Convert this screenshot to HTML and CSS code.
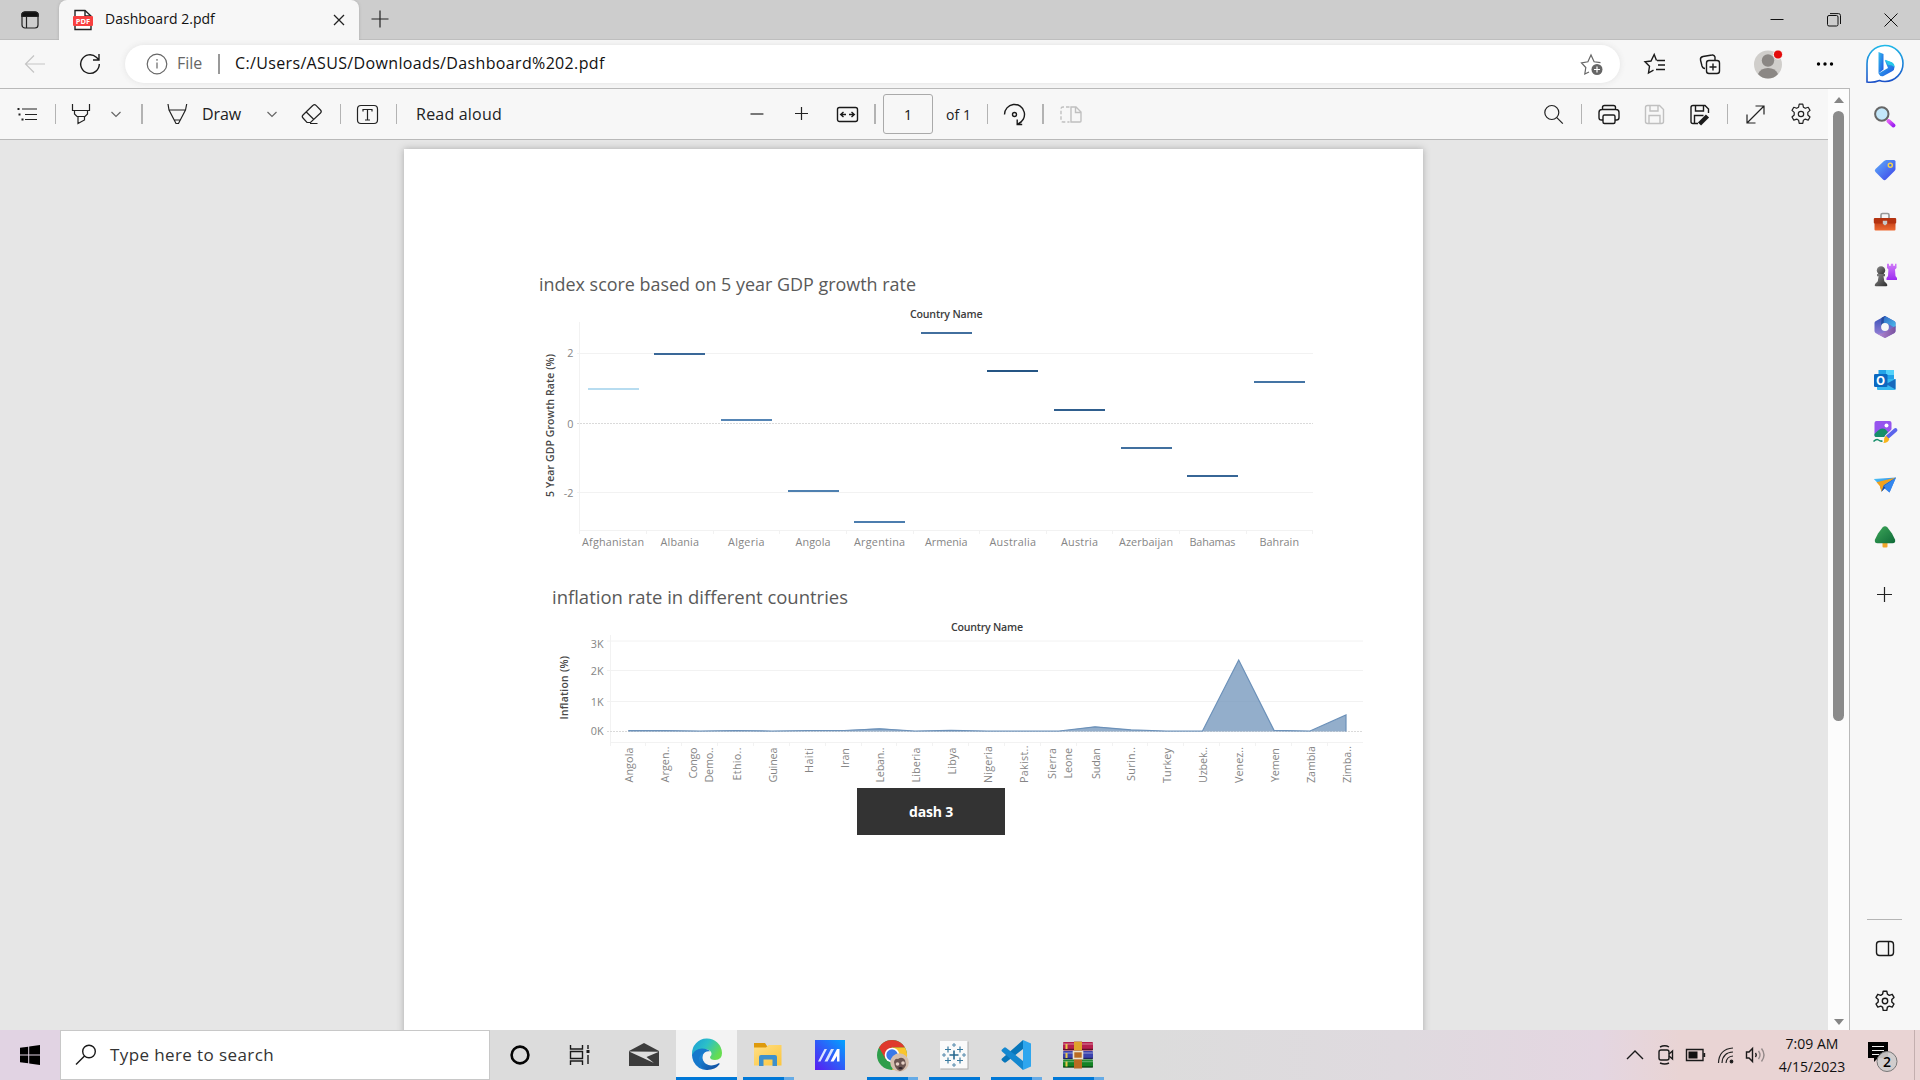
FILE: index.html
```html
<!DOCTYPE html>
<html lang="en">
<head>
<meta charset="utf-8">
<title>Dashboard 2.pdf</title>
<link rel="stylesheet" href="styles.css">
</head>
<body>
<svg class="defs" width="0" height="0">
  <defs>
    <linearGradient id="bing" x1="0" y1="0" x2="0" y2="1"><stop offset="0" stop-color="#20b8e8"/><stop offset="1" stop-color="#1b50c8"/></linearGradient>
    <linearGradient id="bingB" x1="0" y1="0" x2="1" y2="1"><stop offset="0" stop-color="#36c2ef"/><stop offset="1" stop-color="#1c4de0"/></linearGradient>
    <linearGradient id="handle" x1="0" y1="0" x2="1" y2="1"><stop offset="0" stop-color="#e05cf5"/><stop offset="1" stop-color="#9d20f0"/></linearGradient>
    <linearGradient id="tag" x1="0" y1="0" x2="1" y2="1"><stop offset="0" stop-color="#5eb0fa"/><stop offset="1" stop-color="#3d3fe8"/></linearGradient>
    <linearGradient id="box" x1="0" y1="0" x2="0" y2="1"><stop offset="0" stop-color="#b8330f"/><stop offset="1" stop-color="#ee6a32"/></linearGradient>
    <linearGradient id="pawn" x1="0" y1="0" x2="1" y2="1"><stop offset="0" stop-color="#8a8a8a"/><stop offset="1" stop-color="#2e2e2e"/></linearGradient>
    <linearGradient id="rook" x1="0" y1="0" x2="0" y2="1"><stop offset="0" stop-color="#d07af8"/><stop offset="1" stop-color="#9c2cf0"/></linearGradient>
    <linearGradient id="plane" x1="0" y1="0" x2="1" y2="1"><stop offset="0" stop-color="#4cc6f4"/><stop offset="1" stop-color="#2a62e4"/></linearGradient>
    <linearGradient id="tree" x1="0" y1="0" x2="1" y2="1"><stop offset="0" stop-color="#3ea85a"/><stop offset="1" stop-color="#0f6a38"/></linearGradient>
    <linearGradient id="edgeTop" x1="0" y1="0" x2="1" y2=".5"><stop offset="0" stop-color="#1a9bd8"/><stop offset=".5" stop-color="#2cc0c8"/><stop offset="1" stop-color="#66dd50"/></linearGradient>
    <linearGradient id="edgeLow" x1="0" y1="0" x2="1" y2="1"><stop offset="0" stop-color="#1b8fe0"/><stop offset="1" stop-color="#10489a"/></linearGradient>
    <linearGradient id="folder" x1="0" y1="0" x2="1" y2="1"><stop offset="0" stop-color="#ffdf85"/><stop offset="1" stop-color="#fcc53c"/></linearGradient>
    <linearGradient id="myasus" x1="0" y1="1" x2="1" y2="0"><stop offset="0" stop-color="#5a1cf0"/><stop offset=".5" stop-color="#2f5cf8"/><stop offset="1" stop-color="#00a4ff"/></linearGradient>
    <linearGradient id="hexA" x1="0" y1="0" x2="1" y2="1"><stop offset="0" stop-color="#2e5fc0"/><stop offset="1" stop-color="#4cc0ee"/></linearGradient>
    <linearGradient id="hexB" x1="0" y1="0" x2="0" y2="1"><stop offset="0" stop-color="#3450b8"/><stop offset="1" stop-color="#a486d8"/></linearGradient>
    <linearGradient id="hexC" x1="0" y1="0" x2="1" y2="0"><stop offset="0" stop-color="#b48ad4"/><stop offset="1" stop-color="#7a52a0"/></linearGradient>
    <symbol id="gear" viewBox="0 0 24 24"><path d="M10.2 2.2h3.6l.6 3 1.9 1.1 2.9-1 1.8 3.1-2.2 2v2.6l2.2 2-1.8 3.1-2.9-1-1.9 1.1-.6 3.2h-3.6l-.6-3.2-1.9-1.1-2.9 1-1.8-3.1 2.2-2v-2.6l-2.2-2 1.800-3.1 2.9 1 1.9-1.1z" stroke-linejoin="round"/><circle cx="12" cy="12" r="2.7"/></symbol>
    <symbol id="chevron" viewBox="0 0 12 12"><path d="M1.5 4l4.5 4.500 4.500-4.500"/></symbol>
  </defs>
</svg>

<header class="titlebar">
  <div class="workspaces"><svg class="ic" width="20" height="20" viewBox="0 0 20 20"><rect x="2" y="2" width="16" height="16" rx="3"/><path d="M2 6V4.500Q2 2 5 2H15Q18 2 18 5V6ZM6.500 6V18" /><path d="M2 3.500Q3 2 5 2H15Q18 2 18 4V6.500H2Z" fill="#111"/></svg></div>
  <div class="tab">
    <svg width="20" height="22" viewBox="0 0 20 22"><path d="M2 1.500H12L18 7V20.500H2Z" fill="#fff" stroke="#222" stroke-width="1.400"/><path d="M12 1.500V7H18" fill="none" stroke="#222" stroke-width="1.400"/><rect x="0" y="7" width="20" height="10" rx="1" fill="#f84040"/><text class="pdf-mark" x="10" y="14.800" text-anchor="middle">PDF</text></svg>
    <span class="tab-title">Dashboard 2.pdf</span>
    <svg class="ic tab-close" width="12" height="12" viewBox="0 0 12 12"><path d="M1 1l10 10M11 1L1 11"/></svg>
  </div>
  <svg class="ic new-tab" width="18" height="18" viewBox="0 0 18 18"><path d="M9 .5v17M.5 9h17"/></svg>
  <div class="window-controls">
    <svg class="ic thin" width="14" height="14" viewBox="0 0 14 14"><path d="M.5 6.500h13"/></svg>
    <svg class="ic thin" width="14" height="14" viewBox="0 0 14 14"><rect x=".5" y="2.500" width="10.500" height="10.500" rx="1.500"/><path d="M3 .6h8.500q2 0 2 2V11"/></svg>
    <svg class="ic thin" width="14" height="14" viewBox="0 0 14 14"><path d="M.5.5l13 13M13.500.5l-13 13"/></svg>
  </div>
</header>

<nav class="navbar">
  <svg class="ic faded" width="24" height="24" viewBox="0 0 24 24"><path d="M22 12H2.500M11 3.500L2.500 12l8.500 8.500"/></svg>
  <svg class="ic bold" width="24" height="24" viewBox="0 0 24 24"><path d="M21.300 12a9.300 9.300 0 1 1-3-6.800L21 7.800M21 2v6h-6"/></svg>
  <div class="address">
    <svg class="ic gray" width="22" height="22" viewBox="0 0 22 22"><circle cx="11" cy="11" r="9.800"/><path d="M11 9.500v6M11 6v1.800"/></svg>
    <span class="scheme">File</span><i class="bar"></i><span class="url">C:/Users/ASUS/Downloads/Dashboard%202.pdf</span>
    <svg class="ic gray add-fav" width="24" height="24" viewBox="0 0 24 24"><path d="M9 20l-4.200 2 1-6.500L1.500 10.800l6.400-1L11 3l3.100 6.800 6.400.9"/><circle cx="17" cy="17.500" r="5.500" fill="#666" stroke="none"/><path d="M17 14.500v6M14 17.500h6" stroke="#fff"/></svg>
  </div>
  <svg class="ic bold" width="24" height="24" viewBox="0 0 24 24"><path d="M13.500 8.500L11.200 2.500 8 9l-6 .8 4.500 4.500-1 6.700 5-2.800M14 8.500h8M15 13h7M13 17.500h9"/></svg>
  <svg class="ic bold" width="24" height="24" viewBox="0 0 24 24"><rect x="8.500" y="8.500" width="13" height="13" rx="2.500"/><path d="M15 11.500v7M11.500 15h7M17 8V5q-.8-2.500-3-2L5 4.500Q2 5.200 2.500 8l1.500 6q.8 2.500 3 2.500"/></svg>
  <svg width="30" height="30" viewBox="0 0 30 30"><circle cx="15" cy="15.500" r="14" fill="#d0cecb"/><circle cx="15" cy="11.500" r="6.200" fill="#8b8784"/><path d="M5 25q2.500-6 10-6t10 6q-4 4.500-10 4.500T5 25z" fill="#8b8784"/><circle cx="25" cy="5.500" r="4.600" fill="#e40b0b" stroke="#f7f7f7"/></svg>
  <svg width="20" height="20" viewBox="0 0 20 20"><circle cx="3.500" cy="10" r="1.700"/><circle cx="10" cy="10" r="1.700"/><circle cx="16.500" cy="10" r="1.700"/></svg>
  <svg width="40" height="40" viewBox="0 0 40 40"><path d="M2 38V20A18 18 0 1 1 20 37.500q-3.500 0-5.500-1Q8 39 2 38z" fill="#fff" stroke="url(#bing)" stroke-width="1.600"/><path d="M13.500 8l5 1.900V25.500l-5 4z" fill="url(#bingB)"/><path d="M13.500 29.500L23 24l-1.500-3.500-1.800-4.500 7.200 2.500q2.600 1.500 2.600 4.500t-2.300 4.200L18 32.200q-3 .5-4.500-2.700z" fill="url(#bingB)"/><path d="M20 15.800l6.900 2.500q2.800 1.700 2.600 5-2-2.300-6.500-2.500z" fill="#28c8e8"/></svg>
</nav>

<main class="browser">
  <div class="viewer">
    <div class="document">
      <div class="toolbar">
        <svg class="ic" width="24" height="24" viewBox="0 0 24 24"><path d="M6 7h15M9 12.500h12M9 17.500h12" /><path d="M1.500 7h2M2.500 12.500h2M5.500 17.500h2" stroke-width="2"/></svg>
        <i class="sep"></i>
        <svg class="ic" width="24" height="24" viewBox="0 0 24 24"><path d="M3.500 2v6.500h17V2M5.500 8.500v3.500l2.500 2.500h8L18.500 12V8.500M9 14.500V21.500l6.500-3.500v-3.500"/></svg>
        <svg class="ic gray" width="12" height="12"><use href="#chevron"/></svg>
        <i class="sep wide"></i>
        <svg class="ic" width="24" height="24" viewBox="0 0 24 24"><path d="M3 2l1 6h16.500l1.200-6M4 8l7 13.500h2.500L20.500 8M9.500 18H15"/></svg>
        <span class="label draw">Draw</span>
        <svg class="ic gray" width="12" height="12"><use href="#chevron"/></svg>
        <svg class="ic" width="24" height="24" viewBox="0 0 24 24"><path d="M13 3.300q1.500-1.500 3 0L20.500 8q1.500 1.500 0 3L10.500 20.500H7L3 16q-1.500-1.500 0-3zM6.300 10l7.600 7.500M10 21.500h7.500"/></svg>
        <i class="sep"></i>
        <svg class="ic" width="24" height="24" viewBox="0 0 24 24"><rect x="1.500" y="3.500" width="20" height="18" rx="3.500"/><path d="M7 9.500v-2h9v2M11.500 7.500V18M9 18h5"/></svg>
        <i class="sep"></i>
        <span class="label aloud">Read aloud</span>
        <span></span>
        <svg class="ic" width="14" height="14" viewBox="0 0 14 14"><path d="M.5 7h13"/></svg>
        <svg class="ic" width="14" height="14" viewBox="0 0 14 14"><path d="M0 6.500h13M6.500 0v13"/></svg>
        <svg class="ic bold" width="24" height="24" viewBox="0 0 24 24"><rect x="1.500" y="5.500" width="20" height="14" rx="2"/><path d="M4.500 12.500H10M7.500 10l-2.800 2.500L7.500 15M18.500 12.500H13M15.500 10l2.800 2.500-2.800 2.500"/></svg>
        <i class="sep wide"></i>
        <span class="page-input">1</span>
        <span class="label of">of 1</span>
        <i class="sep"></i>
        <svg class="ic bold" width="24" height="24" viewBox="0 0 24 24"><path d="M1.500 12.500a10 10 0 1 1 13.500 9.300M14.200 17.500v5h5"/><circle cx="11.500" cy="12.500" r="2"/></svg>
        <i class="sep wide"></i>
        <svg class="ic disabled" width="24" height="24" viewBox="0 0 24 24"><path d="M12 5h5l5 5v9q0 1-1 1h-9zM16.500 5v5.500H22"/><path d="M10.500 5H4Q2 5 2 7v11q0 2 2 2h6.500" stroke-dasharray="3.500 2"/></svg>
        <span></span>
        <svg class="ic" width="24" height="24" viewBox="0 0 24 24"><circle cx="9.800" cy="10.500" r="7"/><path d="M14.800 15.700l6 6"/></svg>
        <i class="sep"></i>
        <svg class="ic bold" width="24" height="24" viewBox="0 0 24 24"><path d="M6 18H4.500Q2 18 2 15.500v-5q0-3 3-3h14q3 0 3 3v5q0 2.500-2.500 2.500H18M5.500 7.500v-2q0-2 2-2h9q2 0 2 2v2"/><rect x="6" y="13" width="12" height="8.500" rx="1.500"/></svg>
        <svg class="ic disabled" width="24" height="24" viewBox="0 0 24 24"><path d="M3.500 5.500q0-2 2-2h12l4 4v12q0 2-2 2h-14q-2 0-2-2zM8 3.500V9h8V3.500M7 21.500v-8h11v8"/></svg>
        <svg class="ic bold" width="24" height="24" viewBox="0 0 24 24"><path d="M10 21.500H5q-2 0-2-2v-14q0-2 2-2h12L20.500 7v4M7.500 3.500V9h8V3.500M6.500 21.500v-8h9"/><path d="M11.500 22l8-8" stroke-width="4.500"/></svg>
        <i class="sep"></i>
        <svg class="ic" width="24" height="24" viewBox="0 0 24 24"><path d="M3 21L20 4M11.500 4H20v8.500M3 12.500V21h8.500"/></svg>
        <svg class="ic gear" width="24" height="24"><use href="#gear"/></svg>
      </div>

      <div class="canvas">
        <article class="page">
          <h2 class="title-gdp"><svg width="400" height="30"><text x="1" y="20" textLength="377" lengthAdjust="spacingAndGlyphs">index score based on 5 year GDP growth rate</text></svg></h2>
          <svg class="chart" width="1019" height="255" viewBox="404 300 1019 255">
            <text class="head" x="910" y="318" textLength="72.500">Country Name</text>
            <g class="grid"><path d="M577 353.500H1313M577 492.500H1313M579.500 322V534M579 530.500H1313"/><path class="zero" d="M577 423.500H1313"/>
              <path d="M646.500 530v4M713.500 530v4M779.500 530v4M846.500 530v4M913.500 530v4M979.500 530v4M1046.500 530v4M1112.500 530v4M1179.500 530v4M1246.500 530v4M1312.500 530v4"/></g>
            <g class="tick" text-anchor="end"><text x="573.500" y="357">2</text><text x="573.500" y="428">0</text><text x="573.500" y="497">-2</text></g>
            <text class="axis" transform="translate(554 497) rotate(-90)" textLength="143">5 Year GDP Growth Rate (%)</text>
            <g stroke-width="2">
              <path stroke="#b7dcf0" d="M588 389h51"/><path stroke="#3a6898" d="M654 354h51"/><path stroke="#5585b5" d="M721 420h51"/><path stroke="#4e80b0" d="M788 491h51"/><path stroke="#4c7dae" d="M854 522h51"/><path stroke="#426f9e" d="M921 333h51"/><path stroke="#255584" d="M987 371h51"/><path stroke="#2f5e8e" d="M1054 410h51"/><path stroke="#41709f" d="M1121 448h51"/><path stroke="#376696" d="M1187 476h51"/><path stroke="#4474a4" d="M1254 382h51"/>
            </g>
            <g class="tick">
              <text x="582" y="546" textLength="62">Afghanistan</text><text x="660.500" y="546" textLength="38.500">Albania</text><text x="728" y="546" textLength="36.500">Algeria</text><text x="795.500" y="546" textLength="35">Angola</text><text x="854" y="546" textLength="51">Argentina</text><text x="925" y="546" textLength="42.500">Armenia</text><text x="989.500" y="546" textLength="46.500">Australia</text><text x="1061" y="546" textLength="37">Austria</text><text x="1119" y="546" textLength="54">Azerbaijan</text><text x="1189.500" y="546" textLength="46">Bahamas</text><text x="1259.500" y="546" textLength="39.500">Bahrain</text>
            </g>
          </svg>
          <h2 class="title-inflation"><svg width="400" height="30"><text x="1" y="21" textLength="296" lengthAdjust="spacingAndGlyphs">inflation rate in different countries</text></svg></h2>
          <svg class="chart" width="1019" height="173" viewBox="404 615 1019 173">
            <text class="head" x="951" y="631" textLength="72">Country Name</text>
            <g class="grid"><path d="M607 641H1363M607 670.500H1363M607 701.500H1363M610.500 635V746M610 742.500H1363"/><path class="zero" d="M607 731.500H1363"/>
              <path d="M645.500 742v4M681.500 742v4M717.500 742v4M753.500 742v4M789.500 742v4M825.500 742v4M861.500 742v4M896.500 742v4M932.500 742v4M968.500 742v4M1004.500 742v4M1040.500 742v4M1076.500 742v4M1112.500 742v4M1147.500 742v4M1183.500 742v4M1219.500 742v4M1255.500 742v4M1291.500 742v4M1327.500 742v4"/></g>
            <g class="tick" text-anchor="end"><text x="603.500" y="648">3K</text><text x="603.500" y="675">2K</text><text x="603.500" y="706">1K</text><text x="603.500" y="735">0K</text></g>
            <text class="axis" transform="translate(567.500 719.500) rotate(-90)" textLength="63.500">Inflation (%)</text>
            <path class="area" d="M628.300 731.500V730.300L664 730.300 700 731 736 730.300 772 731 808 730.400 844 730.300 879.500 728.200 915 731 951 730.300 987 731 1023 731 1059 731 1095 726.500 1131 729.800 1166 731 1202.500 731 1238.700 660 1274 730.300 1310 731 1346 715V731.500Z"/>
            <path class="area-line" d="M628.300 730.600H664L700 731 736 730.500 772 731 808 730.500H844L879.500 728.800 915 731 951 730.300 987 731H1059L1095 726.800 1131 729.800 1166 731H1202.500L1238.700 660 1274 730.300 1310 731 1346 715V731.500"/>
            <g class="tick">
              <text transform="translate(633 782.500) rotate(-90)" textLength="35">Angola</text><text transform="translate(669 782.500) rotate(-90)" textLength="36">Argen..</text><text transform="translate(697 778.500) rotate(-90)" textLength="31">Congo</text><text transform="translate(713 782.500) rotate(-90)" textLength="35">Demo..</text><text transform="translate(741 780.500) rotate(-90)" textLength="33">Ethio..</text><text transform="translate(777 782.500) rotate(-90)" textLength="35">Guinea</text><text transform="translate(813 773) rotate(-90)" textLength="25">Haiti</text><text transform="translate(849 768) rotate(-90)" textLength="20">Iran</text><text transform="translate(884 782.500) rotate(-90)" textLength="35">Leban..</text><text transform="translate(920 782.500) rotate(-90)" textLength="35">Liberia</text><text transform="translate(956 774.500) rotate(-90)" textLength="27">Libya</text><text transform="translate(992 783) rotate(-90)" textLength="37">Nigeria</text><text transform="translate(1028 783) rotate(-90)" textLength="37.500">Pakist..</text><text transform="translate(1056 779) rotate(-90)" textLength="31">Sierra</text><text transform="translate(1072 778.500) rotate(-90)" textLength="30.500">Leone</text><text transform="translate(1100 779) rotate(-90)" textLength="31">Sudan</text><text transform="translate(1135 781) rotate(-90)" textLength="34">Surin..</text><text transform="translate(1171 783) rotate(-90)" textLength="35">Turkey</text><text transform="translate(1207 783) rotate(-90)" textLength="36">Uzbek..</text><text transform="translate(1243 783) rotate(-90)" textLength="36">Venez..</text><text transform="translate(1279 782) rotate(-90)" textLength="34">Yemen</text><text transform="translate(1315 783) rotate(-90)" textLength="37">Zambia</text><text transform="translate(1351 783) rotate(-90)" textLength="37">Zimba..</text>
            </g>
          </svg>
          <div class="dash-button">dash 3</div>
        </article>
      </div>
    </div>
    <div class="scrollbar"><i class="arrow up"></i><i class="thumb"></i><i class="arrow down"></i></div>
  </div>

  <aside class="sidebar">
    <svg width="24" height="24" viewBox="0 0 24 24"><path d="M15.500 16l5 4.500" stroke="url(#handle)" stroke-width="4" stroke-linecap="round"/><circle cx="8.800" cy="9" r="6.700" fill="#c3e7fa" stroke="#666" stroke-width="2"/></svg>
    <svg width="24" height="24" viewBox="0 0 24 24"><path d="M13 2h8q1.500 0 1.500 1.500V11q0 1-1 2l-8.500 8.500q-1.500 1.500-3 0L2.500 14q-1.500-1.500 0-3L11 3z" fill="url(#tag)"/><circle cx="17.300" cy="7.300" r="2" fill="#3f68ee" stroke="#f5d34c" stroke-width="1.500"/></svg>
    <svg width="24" height="24" viewBox="0 0 24 24"><path d="M8 8V5q0-1.500 1.500-1.500h5Q16 3.500 16 5v3" fill="none" stroke="#999" stroke-width="1.700"/><rect x="1.500" y="9" width="21" height="11.500" rx="1" fill="url(#box)"/><rect x=".8" y="8" width="22.400" height="5.500" rx="1" fill="#b43310"/><path d="M9.800 10.800h4.400v3l-2.200 1.800-2.200-1.800z" fill="#c8c8c8"/></svg>
    <svg width="24" height="24" viewBox="0 0 24 24"><path d="M14 .8h2v2h1.800v-2h2.400v2H22v-2h1.500V5l-1.500 1.500.5 6.500 1.500 2v2H13.500v-2l1.500-2 .4-6.500L14 5z" fill="url(#rook)"/><circle cx="8" cy="7.500" r="4.200" fill="url(#pawn)"/><path d="M4 11h8v2.200h-1.500l.8 5 2.500 2.500q1.200 2.500-.5 2.500H2.800q-1.800 0-.5-2.500l2.500-2.500.8-5H4z" fill="url(#pawn)"/></svg>
    <svg width="24" height="24" viewBox="0 0 24 24"><path d="M12 1l9.500 5.200q1 .7 1 1.800v8q0 1.200-1 1.900L13 22.600q-1 .6-2 0l-8.500-4.700q-1-.7-1-1.900V8q0-1.200 1-1.800z" fill="url(#hexB)"/><path d="M8.500 3L12 1l9.500 5.200q1 .7 1 1.800v5L14 8.200 8 11z" fill="url(#hexA)"/><path d="M8 11.500L8.500 3 12 1q-1.500 2-1.200 7.300z" fill="#274a9e"/><path d="M22.500 11v5q0 1.200-1 1.900L13 22.600q-1 .6-2 0L4.500 19 9 18.500l7.500-4z" fill="url(#hexC)"/><circle cx="12" cy="12" r="3.900" fill="#f7f7f7"/></svg>
    <svg width="24" height="24" viewBox="0 0 24 24"><path d="M5.500 2H21v15H5.500z" fill="#23a3e8"/><path d="M13 2h8v5h-8z" fill="#54d2fa"/><path d="M4 13l9-2 9.500 0V21q0 1-1 1H5q-1 0-1-1z" fill="#35b8f1"/><path d="M22.500 11v10.500L13 16z" fill="#1769bd"/><rect x="1" y="6" width="13.500" height="13" rx="1.300" fill="#0b68c1"/><text class="outlook-mark" x="7.700" y="16.800" text-anchor="middle">O</text></svg>
    <svg width="26" height="26" viewBox="0 0 26 26"><rect x="2.500" y="2" width="17" height="16" rx="2" fill="#9654ee"/><circle cx="14.500" cy="6.500" r="2" fill="#fff"/><path d="M2.500 15q6-7.500 10.500-5l3 3-4 5H4.500q-2 0-2-1.500z" fill="#168f6a"/><path d="M1.500 22.500q3-3 5-1.500t4 1" fill="none" stroke="#168f6a" stroke-width="1.500"/><path d="M15.500 18L23.500 10.500" stroke="#f7f7f7" stroke-width="5.500" stroke-linecap="round"/><path d="M15.500 18L23.500 11" stroke="#5b64ec" stroke-width="3.800" stroke-linecap="round"/><path d="M14 16.800l3.300 3.200q-1 4-6 4 1-1.200.8-3.200t1.900-4z" fill="#f8b51c"/></svg>
    <svg width="24" height="24" viewBox="0 0 24 24"><path d="M.8 6L23 4.500 16.500 19.500 11.500 15.500 8.500 18.800 6.800 12z" fill="url(#plane)"/><path d="M23 4.500L3.500 9.300l3.300 3.700 1.700 5.800L10.800 12z" fill="#f1a11c"/><path d="M8.500 18.800L10.800 12.500 23 4.500 11.500 15.500z" fill="#214b9c"/><path d="M10.800 13L23 4.500 16.500 19.500z" fill="#3386ee"/></svg>
    <svg width="24" height="24" viewBox="0 0 24 24"><rect x="9.500" y="16" width="5" height="6.500" rx="1" fill="#f2a62a"/><path d="M9.500 2.500q2.500-2.500 5 0L19 8.500l3 6q1 3.500-2.500 3.700H4.500Q1 18 2 14.500L5 8.500z" fill="url(#tree)"/></svg>
    <svg class="ic add" width="16" height="16" viewBox="0 0 16 16"><path d="M7.500 1v15M0 8.500h15"/></svg>
    <i class="rule"></i>
    <svg class="ic bold panel" width="20" height="20" viewBox="0 0 20 20"><rect x="1.500" y="2.500" width="17" height="14" rx="3"/><path d="M13.500 2.500v14"/></svg>
    <svg class="ic bold settings" width="24" height="24"><use href="#gear"/></svg>
  </aside>
</main>

<footer class="taskbar">
  <div class="start"><svg width="20" height="20" viewBox="0 0 20 20"><path d="M0 2.800L8.200 1.700V9.500H0zM9.200 1.500L20 0V9.500H9.200zM0 10.500H8.200V18.300L0 17.200zM9.200 10.500H20V20L9.200 18.500z"/></svg></div>
  <div class="search"><svg class="ic bold" width="22" height="22" viewBox="0 0 22 22"><circle cx="14" cy="7.500" r="6.300"/><path d="M9.500 12L1 20.500"/></svg><span>Type here to search</span></div>
  <div class="app"><svg width="24" height="24" viewBox="0 0 24 24"><circle cx="12" cy="12" r="8.400" fill="none" stroke="#050505" stroke-width="2.600"/></svg></div>
  <div class="app"><svg class="ic bold" width="22" height="22" viewBox="0 0 22 22"><path d="M1.500 1v4h12V1M1.500 21v-4h12v4M1.500 7.500h12v7h-12zM19 1v4M19 11v9"/><path d="M19 6v3" stroke-width="3"/></svg></div>
  <div class="app"><svg width="32" height="26" viewBox="0 0 32 26"><path d="M2 9L17 1l15 8v15H2z" fill="#3c3c3c"/><path d="M2 9.500l30 .2L19.500 15l7.500 6z" fill="#dedede"/></svg></div>
  <div class="app active"><svg width="30" height="30" viewBox="0 0 30 30"><path d="M0 14A15 15 0 0 1 30 13q0 7-7 7-5 0-5-3 2-1.500 1.500-4Q18 9 12 9 4 9 0 16z" fill="url(#edgeTop)"/><path d="M0 15Q3 8.500 10 8.500q5.500 0 8 2.800-5.500-.5-7.300 4Q9 21 14 27l2.500 3Q6 30.500 1.500 21.500 0 18 0 15z" fill="#1678cc"/><path d="M12 12.800q-3 3.500-1 7.500 3 6 10 5 3.500-.5 5.500-2 1.500-.5 1 1Q23.500 30 15 30 8.500 28.500 7 22q-1-6 5-9.200z" fill="url(#edgeLow)"/></svg><i class="line"></i></div>
  <div class="app"><svg width="30" height="30" viewBox="0 0 30 30"><path d="M1 3h11l2 3h12v4H1z" fill="#de9a0c"/><path d="M1 7.500h12L15.500 5h13v20.500H1z" fill="url(#folder)"/><path d="M6 26V17q0-2 2-2h14q2 0 2 2v9h-4.500v-6.500h-9V26z" fill="#3e90cc"/></svg><i class="line more"></i></div>
  <div class="app"><svg width="30" height="30" viewBox="0 0 30 30"><path d="M0 0h30v30H0z" fill="url(#myasus)"/><path d="M3 21.500L9.500 9H12L5.500 21.500zM9.500 21.500L16 9h3l-6.500 12.500z" fill="#d8e4ff"/><path d="M15.500 21.500L22 9h2.500v12.500H22v-5.500l-3.500 5.500z" fill="#fff"/></svg></div>
  <div class="app"><svg width="34" height="34" viewBox="0 0 34 34"><circle cx="17" cy="17" r="15" fill="#2e9e4b"/><path d="M4 9.500A15 15 0 0 1 30 9.500H17L10.500 21z" fill="#df3a2d"/><path d="M30 9.500A15 15 0 0 1 17 32L23.500 20 17 9.500z" fill="#fbc52d"/><circle cx="17" cy="17" r="7.300" fill="#fff"/><circle cx="17" cy="17" r="5.700" fill="#3a78e8"/><circle cx="24.500" cy="24.500" r="9.300" fill="#d5bfae"/><path d="M19 24q1-4 4-3 4-3 7 1l1 5q-2 5-6 6-5-1-6-9z" fill="#6b5550"/><circle cx="22.500" cy="26" r="1.800" fill="#e5d0c4"/><circle cx="28" cy="25" r="1.800" fill="#e5d0c4"/><path d="M23 30q2.500-2 5 0-2 2.500-5 0z" fill="#2e2228"/></svg><i class="line more"></i></div>
  <div class="app"><svg width="30" height="30" viewBox="0 0 30 30"><rect x="1.500" y="1.500" width="28" height="28" fill="#aaa"/><rect x="1" y="1" width="27.500" height="27.500" fill="#fafafa"/><path d="M15 10.500v9M10.500 15h9" stroke="#28688f" stroke-width="1.600"/><path d="M9 6.500v6M6 9.500h6M21 6.500v6M18 9.500h6M9 17.500v6M6 20.500h6M21 17.500v6M18 20.500h6" stroke="#3a7ba0" stroke-width="1.200"/><path d="M15 3v4M13 5h4M15 23v4M13 25h4M3 15h4M5 13v4M23 15h4M25 13v4" stroke="#5288ab"/></svg><i class="line"></i></div>
  <div class="app"><svg width="30" height="30" viewBox="0 0 30 30"><path d="M22 0L30 3.500v23L22 30z" fill="#2fa6ee"/><path d="M22 0L1 18.500q-1 1 0 2l2 1.800q1 .8 2 0L22 9z" fill="#0876ba"/><path d="M22 30L1 11.500q-1-1 0-2l2-1.800q1-.8 2 0L22 21z" fill="#1488d0"/></svg><i class="line more"></i></div>
  <div class="app"><svg width="30" height="30" viewBox="0 0 30 30"><rect y="2" width="30" height="8.500" rx="1" fill="#b51f4c"/><rect y="11" width="30" height="8" rx="1" fill="#3b42ad"/><rect y="19.500" width="30" height="8" rx="1" fill="#138324"/><path d="M0 4h30M0 13h30M0 21.500h30" stroke="#fff" stroke-opacity=".3" stroke-width="1.500"/><path d="M0 9.500h30M0 18.500h30M0 27h30" stroke="#000" stroke-opacity=".45" stroke-width="1.500"/><path d="M3.500 4v5M3.500 13v5M3.500 21.500v5" stroke="#e9c84b" stroke-width="2"/><rect x="11" y="1.500" width="8" height="27" fill="#ba6a22"/><path d="M11 2h8v8h-8z" fill="#dfa32a"/><rect x="10.500" y="11.500" width="9" height="7" fill="none" stroke="#e9e2cf" stroke-width="1.600"/></svg><i class="line more"></i></div>
  <span></span>
  <svg class="ic bold" width="18" height="18" viewBox="0 0 18 18"><path d="M1 13l8-8 8 8"/></svg>
  <svg class="ic bold" width="20" height="20" viewBox="0 0 20 20"><rect x="3" y="5" width="10" height="10" rx="2"/><path d="M13 9l3.500-3v8L13 11M4 2q5-2.500 9 0M4 18q5 2 9 0"/></svg>
  <svg class="ic bold" width="20" height="14" viewBox="0 0 20 14"><path d="M.5 1.500H17v11H.5zM18.500 5v4"/><path d="M2.500 3.500h9v7h-9z" fill="#111" stroke="none"/></svg>
  <svg class="ic" width="18" height="18" viewBox="0 0 18 18"><path d="M1.500 17Q2 3 16 2M5 17q.5-10.500 11-11M9 17q.5-6.500 7-7"/><circle cx="14.500" cy="15.500" r="1.300" fill="#111"/></svg>
  <svg class="ic bold" width="22" height="20" viewBox="0 0 22 20"><path d="M1.500 7H4L7.500 3.500V16.500L4 13H1.500zM10.500 8q1.500 2 0 4"/><path d="M13.500 6q3 4 0 8M16.500 3.500q5 6.500 0 13" stroke="#948a8a"/></svg>
  <div class="clock"><span>7:09 AM</span><span>4/15/2023</span></div>
  <svg class="notify" width="32" height="34" viewBox="0 0 32 34"><path d="M0 4h20v16h-10l-4 4v-4H0z"/><path d="M4 8.500h12M4 12.500h12M4 16.500h7" stroke="#eee" stroke-width="1.200"/><circle cx="19" cy="23.500" r="10" fill="#cfcccc" fill-opacity=".93" stroke="#777"/><text x="19" y="28.500" text-anchor="middle">2</text></svg>
  <i class="desktop"></i>
</footer>
</body>
</html>
```
FILE: styles.css
```css
* { box-sizing: border-box; }
body { margin: 0; width: 1920px; height: 1080px; overflow: hidden; display: flex; flex-direction: column; font-family: "Open Sans", "Noto Sans", sans-serif; color: #111; background: #f7f7f7; }
svg { display: block; flex: none; overflow: visible; }
i { display: block; }
.defs { position: absolute; }
.ic { fill: none; stroke: #222; stroke-width: 1.2; }
.ic.bold { stroke: #1a1a1a; stroke-width: 1.4; }
.ic.thin { stroke: #111; stroke-width: 1; }
.ic.gray { stroke: #666; }
.ic.faded { stroke: #c5c5c5; }
.ic.disabled { stroke: #c0c0c0; stroke-width: 1.4; }

.titlebar { height: 40px; flex: none; display: flex; background: #cdcdcd; border-bottom: 1px solid #bdbdbd; }
.workspaces { width: 59px; padding: 10px 0 0 20px; }
.tab { width: 300px; height: 40px; padding: 0 14px; display: flex; align-items: center; background: #f7f7f7; border-radius: 8px 8px 0 0; box-shadow: 0 0 3px #aaa; clip-path: inset(0 -4px 0 -4px); }
.tab-title { margin: -2px 0 0 12px; font-size: 14px; line-height: 20px; white-space: nowrap; letter-spacing: .03px; }
.tab-close { margin-left: auto; }
.tab .tab-close { stroke-width: 1.3; }
.new-tab { margin: 10px 0 0 12px; }
.pdf-mark { font: bold 7.500px "Open Sans", sans-serif; fill: #fff; }
.window-controls { margin: 13px 22px 0 auto; display: flex; gap: 43px; }

.navbar { height: 48px; flex: none; padding-bottom: 1px; display: grid; grid-template-columns: 70px 40px 1525px 40px 70px 46px 68px 52px; align-items: center; justify-items: center; }
.address { width: 1495px; height: 38px; border-radius: 19px; padding: 0 16px 0 21px; display: flex; align-items: center; background: #fff; box-shadow: 0 0 6px #e2e2e2; font-size: 16px; }
.scheme { margin: -1px 0 0 9px; color: #666; width: 31px; }
.bar { width: 2px; height: 20px; margin: 0 15px 0 10px; background: #999; }
.url { margin-top: -1px; letter-spacing: .35px; white-space: nowrap; }
.add-fav { margin-left: auto; }

.browser { height: 942px; flex: none; display: flex; }
.viewer { width: 1850px; border: solid #b9b9b9; border-width: 1px 1px 0 0; display: flex; }
.document { width: 1828px; display: flex; flex-direction: column; }
.toolbar { height: 51px; flex: none; border-bottom: 1px solid #b9b9b9; background: #f7f7f7; display: grid; align-items: center; justify-items: center; grid-template-columns: 55px 1px 50px 20px 32px 38px 53px 45px 36px 20px 35px 22px 105px 222px 46px 44px 48px 6px 60px 41px 16px 40px 16px 40px 443px 40px 14px 42px 48px 44px 10px 47px 44px; }
.sep { width: 1px; height: 20px; background: #b3b3b3; }
.sep.wide { width: 2px; }
.label { font-size: 16px; white-space: nowrap; color: #222; }
.label.draw { letter-spacing: -.1px; margin-right: 2px; }
.label.aloud { letter-spacing: .2px; margin-right: 1px; }
.label.of { font-size: 14px; letter-spacing: .1px; }
.page-input { width: 50px; height: 40px; border: 1px solid #aaa; border-radius: 3px; font-size: 14px; line-height: 39px; text-align: center; }
.canvas { height: 890px; background: #e6e6e6; overflow: hidden; padding: 9px 0 0 404px; }
.page { width: 1019px; height: 900px; background: #fff; box-shadow: 0 0 7px #aaa; display: flex; flex-direction: column; }
.title-gdp, .title-inflation { flex: none; font-weight: 400; font-size: 18px; fill: #5a5a5a; }
.title-gdp { margin: 122px 0 29px 134px; height: 0; }
.title-inflation { margin: 28px 0 32px 147px; height: 0; }
.chart { fill: none; font-size: 11px; }
.chart text { fill: #858585; }
.chart .tick { font-size: 10.800px; }
.chart .head, .chart .axis { fill: #3c3c3c; font-weight: 600; font-size: 10.600px; }
.chart .axis { font-size: 10.400px; fill: #484848; }
.grid path { stroke: #f2f2f2; stroke-width: 1; }
.grid .zero { stroke: #dadada; stroke-dasharray: 2 1; }
.area { fill: #7597bc; fill-opacity: .78; }
.area-line { stroke: #6c91b9; stroke-width: 1.2; }
.dash-button { width: 148px; height: 47px; flex: none; margin-left: 453px; background: #333; color: #fff; font-weight: 700; font-size: 14px; line-height: 47px; letter-spacing: -.2px; text-align: center; }
.scrollbar { width: 21px; background: #fcfcfc; display: flex; flex-direction: column; align-items: center; padding: 8px 0 5px; }
.arrow { border: 5px solid transparent; }
.arrow.up { border-top: 0; border-bottom: 6px solid #858585; }
.arrow.down { margin-top: auto; border-bottom: 0; border-top: 6px solid #858585; }
.thumb { width: 11px; height: 610px; margin-top: 8px; border-radius: 6px; background: #8b8b8b; }

.sidebar { width: 70px; padding: 3px 1px 0 0; display: grid; align-items: center; justify-items: center; grid-template-rows: repeat(9, 52.500px) 60.500px 1fr 47px 58px; }
.rule { width: 35px; height: 1px; background: #b5b5b5; align-self: end; margin-bottom: 5px; }
.outlook-mark { font: bold 11.500px "Open Sans", sans-serif; fill: #fff; }

.taskbar { height: 50px; flex: none; display: grid; align-items: center; justify-items: center; grid-template-columns: 60px 430px 60px 60px 66px 61px repeat(6, 62px) 510px 32px 30px 30px 30px 29px 84px 60px 6px; background: linear-gradient(90deg, #e1d3e3 0 60px, #dcdcdc 490px 1150px, #dfdadf 1400px, #e4d6e1 1600px, #e9d4d4 1680px); }
.search { width: 430px; height: 50px; border: 1px solid #c8c8c8; background: #fff; display: flex; align-items: center; padding-left: 14px; font-size: 17px; color: #333; }
.search span { margin: -1px 0 0 13px; letter-spacing: .4px; }
.app { width: 100%; height: 50px; display: grid; grid-template-rows: 47px 3px; place-items: center; }
.app > svg { margin-top: 3px; }
.app.active { background: #f3f3f3; }
.active > svg, .line.more { justify-self: center; }
.line { width: 51px; height: 3px; background: #0078d7; }
.active .line { width: 61px; }
.line.more { background: linear-gradient(90deg, #0078d7 41px, #66abe6 41px); }
.clock { display: flex; flex-direction: column; align-items: center; font-size: 14px; line-height: 23px; letter-spacing: 0; white-space: nowrap; }
.notify { font-size: 14px; font-weight: 600; }
.desktop { width: 1px; height: 50px; background: #c3afaf; justify-self: start; }
```
